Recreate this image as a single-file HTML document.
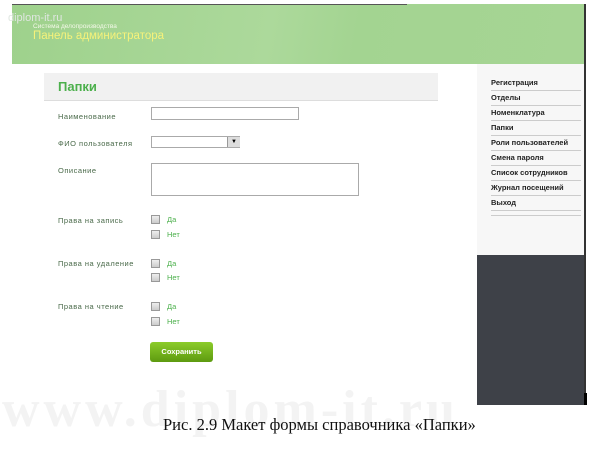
<!DOCTYPE html>
<html><head><meta charset="utf-8"><style>
body{margin:0;width:611px;height:460px;background:#fff;position:relative;overflow:hidden;font-family:"Liberation Sans","DejaVu Sans",sans-serif}
.a{position:absolute}
.hdr{left:12px;top:4px;width:573px;height:60px;background:linear-gradient(100deg,#9ed18c 0%,#acd99b 45%,#a3d491 60%,#a6d594 100%)}
.lbl{font-size:7.5px;color:#4a6a4a;letter-spacing:0.5px}
.inp{border:1px solid #aaa;background:#fff;box-sizing:border-box}
.cb{width:9px;height:9px;border:1px solid #999;background:linear-gradient(#eee,#ccc);box-sizing:border-box}
.cl{font-size:7.5px;color:#4cb04c}
.menu{font-size:7.5px;color:#222;font-weight:bold;left:491px;width:90px;border-bottom:1px solid #ccc;height:14px;line-height:13px}
</style></head><body>
<div class="a hdr"></div>
<div class="a" style="left:12px;top:4px;width:395px;height:1px;background:#555"></div>
<div class="a" style="left:584px;top:4px;width:2px;height:401px;background:#333"></div>
<div class="a" style="left:8px;top:12px;font-size:11px;color:#dfe6e0">diplom-it.ru</div>
<div class="a" style="left:33px;top:23px;font-size:6.5px;color:#f4f8e8">Система делопроизводства</div>
<div class="a" style="left:33px;top:30px;font-size:11.5px;color:#f6f27a">Панель администратора</div>

<div class="a" style="left:477px;top:64px;width:107px;height:191px;background:#f7f7f7"></div>
<div class="a" style="left:477px;top:255px;width:107px;height:150px;background:#3e4148"></div>
<div class="a" style="left:584px;top:393px;width:3px;height:12px;background:#000"></div>

<div class="a menu" style="top:76px">Регистрация</div>
<div class="a menu" style="top:91px">Отделы</div>
<div class="a menu" style="top:106px">Номенклатура</div>
<div class="a menu" style="top:121px">Папки</div>
<div class="a menu" style="top:136px">Роли пользователей</div>
<div class="a menu" style="top:151px">Смена пароля</div>
<div class="a menu" style="top:166px">Список сотрудников</div>
<div class="a menu" style="top:181px">Журнал посещений</div>
<div class="a menu" style="top:196px">Выход</div>
<div class="a" style="left:491px;top:215px;width:90px;height:1px;background:#ccc"></div>

<div class="a" style="left:44px;top:73px;width:394px;height:27px;background:#f1f1f1;border-bottom:1px solid #ddd"></div>
<div class="a" style="left:58px;top:79px;font-size:13px;font-weight:bold;color:#4cb04c">Папки</div>

<div class="a lbl" style="left:58px;top:112px">Наименование</div>
<div class="a inp" style="left:151px;top:107px;width:148px;height:13px"></div>
<div class="a lbl" style="left:58px;top:139px">ФИО пользователя</div>
<div class="a inp" style="left:151px;top:136px;width:89px;height:12px"></div>
<div class="a" style="left:227px;top:137px;width:12px;height:10px;background:#ddd;border-left:1px solid #999;font-size:6px;text-align:center;line-height:10px">▼</div>
<div class="a lbl" style="left:58px;top:166px">Описание</div>
<div class="a inp" style="left:151px;top:163px;width:208px;height:33px"></div>

<div class="a lbl" style="left:58px;top:216px">Права на запись</div>
<div class="a cb" style="left:151px;top:215px"></div><div class="a cl" style="left:167px;top:215px">Да</div>
<div class="a cb" style="left:151px;top:230px"></div><div class="a cl" style="left:167px;top:230px">Нет</div>
<div class="a lbl" style="left:58px;top:259px">Права на удаление</div>
<div class="a cb" style="left:151px;top:259px"></div><div class="a cl" style="left:167px;top:259px">Да</div>
<div class="a cb" style="left:151px;top:273px"></div><div class="a cl" style="left:167px;top:273px">Нет</div>
<div class="a lbl" style="left:58px;top:302px">Права на чтение</div>
<div class="a cb" style="left:151px;top:302px"></div><div class="a cl" style="left:167px;top:302px">Да</div>
<div class="a cb" style="left:151px;top:317px"></div><div class="a cl" style="left:167px;top:317px">Нет</div>

<div class="a" style="left:150px;top:342px;width:63px;height:20px;border-radius:3px;background:linear-gradient(#8ccc2a,#5d9a10);color:#fff;font-size:7.5px;font-weight:bold;text-align:center;line-height:20px">Сохранить</div>

<div class="a" style="left:2px;top:380px;font-family:'Liberation Serif',serif;font-size:52px;font-weight:bold;color:#f3f3f3;letter-spacing:4px">www.diplom-it.ru</div>
<div class="a" style="left:163px;top:415px;font-family:'Liberation Serif',serif;font-size:16.5px;color:#111">Рис. 2.9 Макет формы справочника «Папки»</div>
</body></html>
